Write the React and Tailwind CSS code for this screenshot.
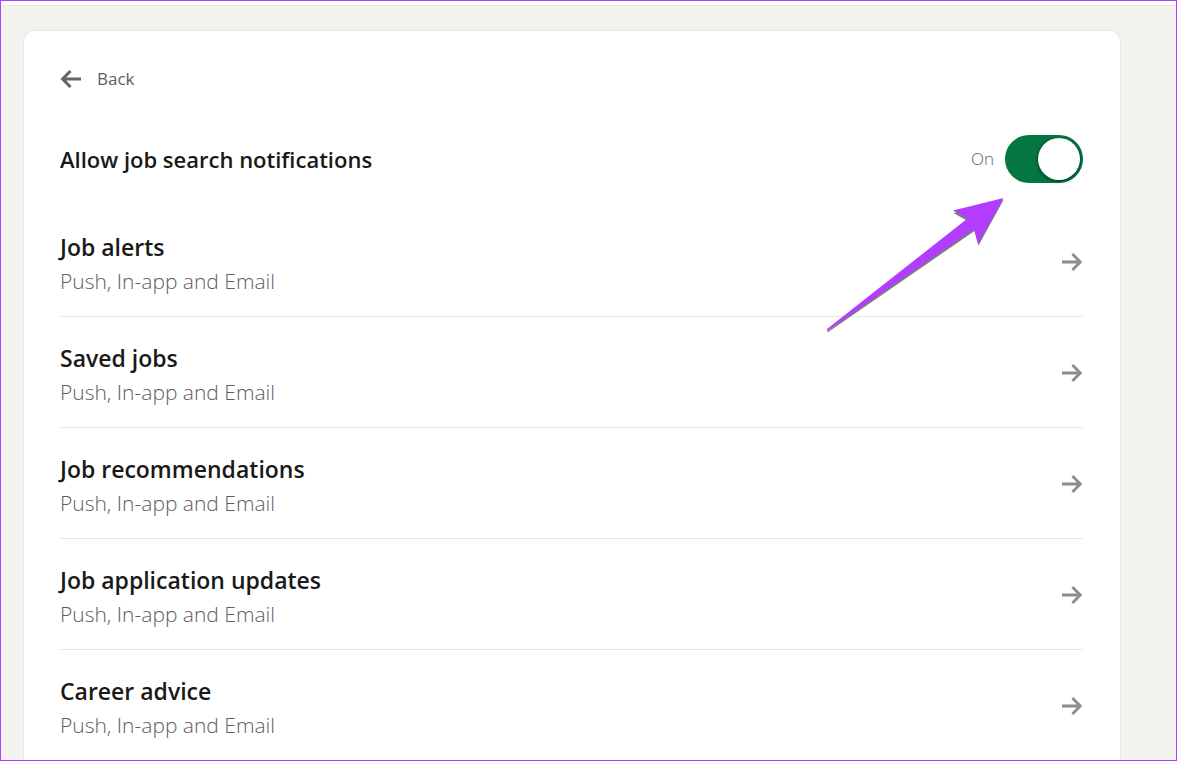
import { useState } from "react";

const notificationRows = [
  { id: "job-alerts", title: "Job alerts", channels: "Push, In-app and Email" },
  { id: "saved-jobs", title: "Saved jobs", channels: "Push, In-app and Email" },
  { id: "job-recommendations", title: "Job recommendations", channels: "Push, In-app and Email" },
  { id: "job-application-updates", title: "Job application updates", channels: "Push, In-app and Email" },
  { id: "career-advice", title: "Career advice", channels: "Push, In-app and Email" },
];

const BackArrow = () => (
  <svg viewBox="0 0 22 20" className="w-[22px] h-5 shrink-0" fill="none" stroke="#666666" strokeWidth="3" aria-hidden="true">
    <path d="M21 10H3M10.5 2L2.6 10l7.9 8" />
  </svg>
);

const RowArrow = () => (
  <svg viewBox="0 0 22 20" className="w-[22px] h-5 shrink-0" fill="none" stroke="#8c8c8c" strokeWidth="2.8" aria-hidden="true">
    <path d="M1 10h18M11.4 2l7.9 8-7.9 8" />
  </svg>
);

// Pointer that calls out the switch
const Pointer = () => (
  <svg
    viewBox="0 0 180 140"
    className="absolute top-full right-full mt-3 w-[180px] h-[140px] pointer-events-none"
    aria-hidden="true"
  >
    <path d="M178.5 5L128.5 18l14 8L2.5 136v1.5L149.5 36l4 14.5z" fill="#7c7c7c" />
    <path d="M178.5 3L128 15.5l14.5 8L2 134v2L149 34l4 15z" fill="#b23dff" />
  </svg>
);

const NotificationRow = ({ row }) => (
  <li className="border-b border-[#e8e8e8]">
    <a href={`#${row.id}`} className="flex items-center justify-between pt-0.5">
      <div className="pt-[23px] pb-5">
        <h2 className="text-[23px] leading-8 font-semibold text-[#191919]">{row.title}</h2>
        <p className="mt-[3px] text-[21px] leading-[30px] font-light text-[#5e5e5e]">{row.channels}</p>
      </div>
      <RowArrow />
    </a>
  </li>
);

const App = () => {
  const [enabled, setEnabled] = useState(true);

  return (
    <div className="h-screen overflow-hidden border border-[#b23dff] bg-[#f3f2ee] font-['Open_Sans','Noto_Sans',sans-serif]">
      <header className="h-[5px] border-b border-[#e6e6e3] bg-white"></header>

      <main className="mt-6 ml-[22px] mr-[55px] h-full rounded-xl border border-[#e8e8e6] bg-white pl-9 pr-[37px] pt-8">
        <button type="button" className="flex items-center gap-[15px] text-[17px] leading-8 font-medium text-[#5e5e5e]">
          <BackArrow />
          Back
        </button>

        <div className="mt-10 mb-[23px] flex items-center justify-between">
          <h1 className="text-[22px] leading-8 font-semibold text-[#191919]">Allow job search notifications</h1>
          <div className="flex items-center gap-[11px]">
            <label htmlFor="allow-notifications" className="text-[17px] font-light text-[#5e5e5e]">
              {enabled ? "On" : "Off"}
            </label>
            <div className="relative flex">
              <input
                id="allow-notifications"
                type="checkbox"
                role="switch"
                checked={enabled}
                onChange={(e) => setEnabled(e.target.checked)}
                className="flex h-12 w-[78px] cursor-pointer appearance-none items-center rounded-full bg-[#8c8c8c] px-[3px] before:h-[42px] before:w-[42px] before:rounded-full before:bg-white before:shadow-[0_1px_3px_1px_rgba(0,0,0,0.4)] checked:justify-end checked:bg-[#057642]"
              />
              <Pointer />
            </div>
          </div>
        </div>

        <ul>
          {notificationRows.map((row) => (
            <NotificationRow key={row.id} row={row} />
          ))}
        </ul>
      </main>
    </div>
  );
};

export default App;
